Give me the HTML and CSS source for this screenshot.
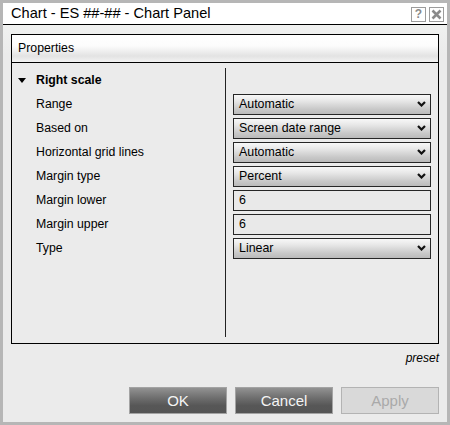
FILE: index.html
```html
<!DOCTYPE html>
<html>
<head>
<meta charset="utf-8">
<link rel="stylesheet" href="styles.css">
</head>
<body>
<div class="window">
  <div class="titlebar">
    <span class="title">Chart - ES ##-## - Chart Panel</span>
    <div class="tb-buttons">
      <span class="tb-btn help">?</span>
      <span class="tb-btn close"><svg width="11" height="11" viewBox="0 0 11 11"><path d="M1.5 1.5 L9.5 9.5 M9.5 1.5 L1.5 9.5" stroke="#8a8a8a" stroke-width="2.6" fill="none"/></svg></span>
    </div>
  </div>
  <div class="content">
    <div class="panel">
      <div class="panel-header">Properties</div>
      <div class="panel-body">
        <div class="labels">
          <div class="row group"><span class="tri"><svg width="8" height="5" viewBox="0 0 8 5"><polygon points="0,0 8,0 4,5" fill="#000"/></svg></span>Right scale</div>
          <div class="row">Range</div>
          <div class="row">Based on</div>
          <div class="row">Horizontal grid lines</div>
          <div class="row">Margin type</div>
          <div class="row">Margin lower</div>
          <div class="row">Margin upper</div>
          <div class="row">Type</div>
        </div>
        <div class="fields">
          <div class="row"></div>
          <div class="row"><div class="select"><span>Automatic</span><svg class="chev" width="9" height="6" viewBox="0 0 9 6"><path d="M1 1 L4.5 4.5 L8 1" stroke="#111" stroke-width="2.2" fill="none"/></svg></div></div>
          <div class="row"><div class="select"><span>Screen date range</span><svg class="chev" width="9" height="6" viewBox="0 0 9 6"><path d="M1 1 L4.5 4.5 L8 1" stroke="#111" stroke-width="2.2" fill="none"/></svg></div></div>
          <div class="row"><div class="select"><span>Automatic</span><svg class="chev" width="9" height="6" viewBox="0 0 9 6"><path d="M1 1 L4.5 4.5 L8 1" stroke="#111" stroke-width="2.2" fill="none"/></svg></div></div>
          <div class="row"><div class="select"><span>Percent</span><svg class="chev" width="9" height="6" viewBox="0 0 9 6"><path d="M1 1 L4.5 4.5 L8 1" stroke="#111" stroke-width="2.2" fill="none"/></svg></div></div>
          <div class="row"><div class="input">6</div></div>
          <div class="row"><div class="input">6</div></div>
          <div class="row"><div class="select"><span>Linear</span><svg class="chev" width="9" height="6" viewBox="0 0 9 6"><path d="M1 1 L4.5 4.5 L8 1" stroke="#111" stroke-width="2.2" fill="none"/></svg></div></div>
        </div>
      </div>
    </div>
    <div class="preset">preset</div>
    <div class="buttons">
      <div class="btn">OK</div>
      <div class="btn">Cancel</div>
      <div class="btn disabled">Apply</div>
    </div>
  </div>
</div>
</body>
</html>
```
FILE: styles.css
```css
html, body {
  margin: 0;
  padding: 0;
}
body {
  width: 450px;
  height: 425px;
  font-family: "Liberation Sans", Arial, sans-serif;
  color: #000;
}
.window {
  box-sizing: border-box;
  width: 450px;
  height: 425px;
  border: 3px solid #b6b6b6;
  background: #ebebeb;
  display: flex;
  flex-direction: column;
}
.titlebar {
  height: 21px;
  background: #fff;
  border-bottom: 1px solid #000;
  display: flex;
  align-items: center;
  justify-content: space-between;
  padding: 0 3px 0 8px;
}
.title {
  font-size: 14.6px;
  line-height: 21px;
}
.tb-buttons {
  display: flex;
  gap: 3px;
  margin-top: 2px;
}
.tb-btn {
  box-sizing: border-box;
  width: 15px;
  height: 15px;
  border: 1px solid #9c9c9c;
  background: #fff;
  display: flex;
  align-items: center;
  justify-content: center;
}
.help {
  font-size: 12px;
  font-weight: bold;
  color: #8a8a8a;
  line-height: 13px;
}
.content {
  flex: 1;
  display: flex;
  flex-direction: column;
  padding: 9px 8px 8px;
  background: linear-gradient(#f0f1f0, #ebebeb 30px);
}
.panel {
  height: 310px;
  box-sizing: border-box;
  border: 1px solid #000;
  display: flex;
  flex-direction: column;
  background: #ebebeb;
}
.panel-header {
  height: 27px;
  line-height: 27px;
  font-size: 12.3px;
  padding-left: 6px;
  border-bottom: 1px solid #000;
  background: linear-gradient(#ffffff 0%, #fcfcfc 40%, #e3e3e3 78%, #f2f2f2 100%);
}
.panel-body {
  flex: 1;
  display: flex;
  padding: 5px 0 6px;
}
.labels {
  width: 213px;
  border-right: 1px solid #222;
}
.fields {
  flex: 1;
  padding: 0 7px;
}
.row {
  height: 24px;
  display: flex;
  align-items: center;
  font-size: 12.3px;
}
.labels .row {
  padding-left: 24px;
}
.labels .group {
  padding-left: 0;
  font-weight: bold;
}
.tri {
  width: 24px;
  padding-left: 6px;
  box-sizing: border-box;
  display: flex;
  align-items: center;
}
.select, .input {
  box-sizing: border-box;
  width: 198px;
  height: 21px;
  border: 1px solid #262626;
  display: flex;
  align-items: center;
  padding-left: 5px;
  font-size: 12.4px;
}
.select {
  justify-content: space-between;
  padding-right: 4px;
  background: linear-gradient(#f8f8f8 0%, #e8e8e8 30%, #c8c8c8 75%, #bababa 100%);
}
.input {
  background: #e9e9e9;
}
.preset {
  margin-top: 7px;
  text-align: right;
  font-style: italic;
  font-size: 12px;
  line-height: 14px;
}
.buttons {
  margin-top: 22px;
  display: flex;
  justify-content: flex-end;
  gap: 8px;
}
.btn {
  box-sizing: border-box;
  width: 98px;
  height: 27px;
  border: 1px solid #a3a3a3;
  background: linear-gradient(#929292 0%, #6e6e6e 40%, #575757 70%, #555555 100%);
  color: #f4f4f4;
  font-size: 15px;
  line-height: 25px;
  text-align: center;
}
.btn.disabled {
  background: #d9d9d9;
  border-color: #b3b3b3;
  color: #a9a9a9;
}
```
